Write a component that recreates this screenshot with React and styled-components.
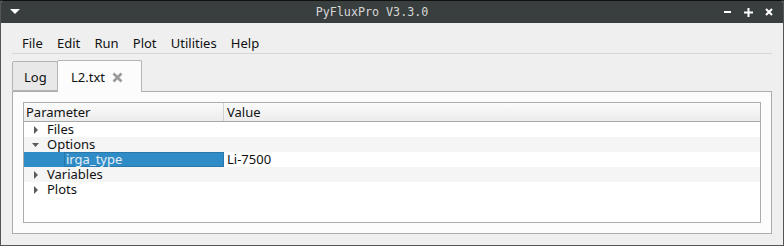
import React from 'react';
import styled, { createGlobalStyle } from 'styled-components';

const Global = createGlobalStyle`
  html, body { margin: 0; padding: 0; background: #2b2b2b; }
  body { font-family: "Noto Sans", "DejaVu Sans", sans-serif; font-size: 13px; }
`;

const Window = styled.div`
  width: 784px;
  height: 246px;
  box-sizing: border-box;
  display: flex;
  flex-direction: column;
  background: #efefef;
  border: 1px solid #555;
  border-top: 1px solid #111;
  border-radius: 3px 3px 0 0;
  overflow: hidden;
`;

const TitleBar = styled.div`
  height: 22px;
  flex: none;
  display: flex;
  align-items: center;
  background: #393f3f;
  padding: 0 10px 0 9px;
`;

const TitleText = styled.div`
  flex: 1;
  text-align: center;
  color: #d6d6d6;
  font-family: "DejaVu Sans Mono", monospace;
  font-size: 11.7px;
`;

const TitleButtons = styled.div`
  display: flex;
  gap: 12px;
  align-items: center;
`;

const Body = styled.div`
  flex: 1;
  display: flex;
  flex-direction: column;
  padding: 0 11px 11px;
`;

const MenuBar = styled.div`
  height: 31px;
  flex: none;
  display: flex;
  align-items: flex-end;
  padding: 0 0 1px 2.9px;
  box-sizing: border-box;
  border-bottom: 1px solid #d6d6d6;
  color: #111;
`;

const MenuItem = styled.span`
  padding: 0 7.1px;
  line-height: 18px;
`;

const TabRow = styled.div`
  display: flex;
  align-items: flex-end;
  margin-top: 6px;
  height: 31px;
  flex: none;
  position: relative;
  z-index: 1;
`;

const Tab = styled.div`
  box-sizing: border-box;
  display: flex;
  align-items: center;
  gap: 7px;
  border: 1px solid #b4b4b4;
  border-radius: 2px 2px 0 0;
  color: #111;
  padding-top: 1px;
  ${({ active }) =>
    active
      ? `
    height: 32px;
    margin-bottom: -1px;
    margin-left: -1px;
    padding-left: 13px;
    padding-right: 18px;
    background: #fcfcfc;
    border-bottom: none;
  `
      : `
    height: 30px;
    padding-left: 11px;
    width: 46px;
    background: #e8e8e8;
  `}
`;

const Pane = styled.div`
  flex: 1;
  box-sizing: border-box;
  border: 1px solid #adadad;
  background: #fcfcfc;
  padding: 10px;
  display: flex;
`;

const Tree = styled.div`
  flex: 1;
  border: 1px solid #adadad;
  background: #fff;
  display: flex;
  flex-direction: column;
`;

const Header = styled.div`
  display: grid;
  grid-template-columns: 200px 1fr;
  height: 18px;
  border-bottom: 1px solid #a8a8a8;
  background: linear-gradient(#fbfbfb, #ececec);
`;

const HeaderCell = styled.div`
  padding-left: ${({ first }) => (first ? '2px' : '3px')};
  line-height: 18px;
  color: #111;
  ${({ first }) => first && 'border-right: 1px solid #d2d2d2;'}
`;

const Row = styled.div`
  display: grid;
  grid-template-columns: 200px 1fr;
  height: 15px;
  line-height: 15px;
  background: ${({ alt }) => (alt ? '#f5f5f5' : '#fff')};
  color: #111;
`;

const NameCell = styled.div`
  display: flex;
  align-items: center;
  padding-left: 8px;
  ${({ selected }) => selected && 'background: #308cc6;'}
`;

const Arrow = styled.span`
  width: 15px;
  display: flex;
  align-items: center;
`;

const Label = styled.span`
  ${({ selected }) =>
    selected &&
    `
    align-self: stretch;
    flex: 1;
    color: #e3edf5;
    padding-left: 2px;
    margin-left: 32px;
    box-shadow: inset 0 0 0 1px #2a78ab;
  `}
`;

const ValueCell = styled.div`
  padding-left: 3px;
`;

const Caret = ({ open }) => (
  <svg width="8" height="8" viewBox="0 0 8 8">
    {open ? (
      <polygon points="0,2 7,2 3.5,6" fill="#5a5a5a" />
    ) : (
      <polygon points="2,0 6,4 2,8" fill="#5a5a5a" />
    )}
  </svg>
);

const rows = [
  { name: 'Files', caret: 'closed' },
  { name: 'Options', caret: 'open' },
  { name: 'irga_type', value: 'Li-7500', selected: true },
  { name: 'Variables', caret: 'closed' },
  { name: 'Plots', caret: 'closed' },
];

export default function App() {
  return (
    <>
      <Global />
      <Window>
        <TitleBar>
          <svg width="10" height="6" viewBox="0 0 10 6">
            <polygon points="0,0 10,0 5,5" fill="#fff" />
          </svg>
          <TitleText>PyFluxPro V3.3.0</TitleText>
          <TitleButtons>
            <svg width="8" height="8" viewBox="0 0 8 8">
              <rect x="0" y="3" width="7" height="2" fill="#fff" />
            </svg>
            <svg width="9" height="9" viewBox="0 0 9 9">
              <rect x="0" y="3.5" width="9" height="2" fill="#fff" />
              <rect x="3.5" y="0" width="2" height="9" fill="#fff" />
            </svg>
            <svg width="8" height="8" viewBox="0 0 8 8">
              <path d="M1 1 L7 7 M7 1 L1 7" stroke="#fff" strokeWidth="2" />
            </svg>
          </TitleButtons>
        </TitleBar>
        <Body>
          <MenuBar>
            {['File', 'Edit', 'Run', 'Plot', 'Utilities', 'Help'].map((m) => (
              <MenuItem key={m}>{m}</MenuItem>
            ))}
          </MenuBar>
          <TabRow>
            <Tab>Log</Tab>
            <Tab active>
              L2.txt
              <svg width="11" height="11" viewBox="0 0 11 11">
                <path d="M1.5 1.5 L9.5 9.5 M9.5 1.5 L1.5 9.5" stroke="#9a9a9a" strokeWidth="2.6" />
              </svg>
            </Tab>
          </TabRow>
          <Pane>
            <Tree>
              <Header>
                <HeaderCell first>Parameter</HeaderCell>
                <HeaderCell>Value</HeaderCell>
              </Header>
              {rows.map((r, i) => (
                <Row key={r.name} alt={i % 2 === 1 && !r.selected}>
                  <NameCell selected={r.selected}>
                    {r.caret && (
                      <Arrow>
                        <Caret open={r.caret === 'open'} />
                      </Arrow>
                    )}
                    <Label selected={r.selected}>{r.name}</Label>
                  </NameCell>
                  <ValueCell>{r.value || ''}</ValueCell>
                </Row>
              ))}
            </Tree>
          </Pane>
        </Body>
      </Window>
    </>
  );
}
